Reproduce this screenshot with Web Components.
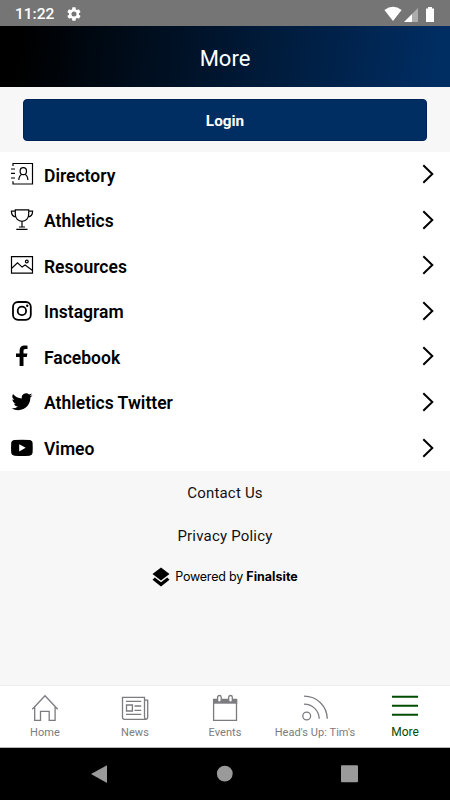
<!DOCTYPE html>
<html lang="en">
<head>
<meta charset="utf-8">
<meta name="viewport" content="width=device-width, initial-scale=1">
<title>More</title>
<style>
    html, body{
        margin: 0;
        height: 100%;
    }
    body{
        font-family: Roboto, "Liberation Sans", sans-serif;
        color: #000;
        background: #f7f7f7;
        overflow: hidden;
    }
</style>
</head>
<body>
<more-screen></more-screen>

<script>
// All the glyphs, keyed by the name that <app-icon> receives
const ICONS = {
    gear: `<svg viewBox="0 0 24 24"><path fill="currentColor" fill-rule="evenodd" d="M19.4 13c0-.3.1-.6.1-1s0-.7-.1-1l2.1-1.600c.2-.2.3-.4.100-.7l-2-3.400c-.1-.2-.4-.3-.6-.2l-2.500 1c-.5-.4-1.100-.7-1.700-1l-.4-2.600c0-.3-.2-.5-.5-.5h-4c-.3 0-.5.2-.5.5L9 5.100c-.6.300-1.200.6-1.700 1l-2.500-1c-.2-.1-.5 0-.6.2l-2 3.400c-.1.300 0 .5.1.7L4.500 11c0 .3-.1.7-.1 1s0 .7.100 1l-2.200 1.600c-.1.200-.2.400-.1.700l2 3.400c.1.200.4.300.6.2l2.500-1c.5.400 1.100.7 1.700 1l.4 2.600c0 .3.200.5.500.5h4c.3 0 .5-.2.500-.5l.4-2.600c.6-.3 1.200-.6 1.700-1l2.500 1c.2.100.5 0 .6-.2l2-3.400c.1-.3.1-.5-.1-.7zM12 15.800a3.800 3.800 0 1 1 0-7.600 3.800 3.800 0 0 1 0 7.600z"/></svg>`,
    wifi: `<svg viewBox="0 0 18 16"><path fill="currentColor" d="M9 15L.4 4Q9-2.600 17.600 4z"/></svg>`,
    signal: `<svg viewBox="0 0 14 14"><path fill="currentColor" opacity=".4" d="M14 0v14H8V6z"/><path fill="currentColor" d="M8 6v8H0z"/></svg>`,
    battery: `<svg viewBox="0 0 8 15"><path fill="currentColor" d="M2 0h4v1.500h2V15H0V1.500h2z"/></svg>`,
    directory: `<svg viewBox="0 0 24 24"><g fill="none" stroke="currentColor" stroke-width="1.200"><path d="M3 4V1.500h19.500V22H3v-2.800M1 7h4M1 11.400h4M1 16h4"/><ellipse cx="13.300" cy="9.200" rx="3.200" ry="3.500"/><path d="M8.800 18c.2-3.200 1.200-4.900 3-5.500M17.900 18c-.2-3.200-1.200-4.900-3-5.500"/></g></svg>`,
    trophy: `<svg viewBox="0 0 24 24"><g fill="none" stroke="currentColor" stroke-width="1.200"><path d="M5.300 1.800h13.400v4.400c0 4.400-3 7.200-6.700 7.200s-6.700-2.800-6.700-7.200zM5.300 3.200H1.400c0 3 1.800 5.400 4.500 5.700M18.700 3.200h3.900c0 3-1.800 5.400-4.500 5.700M12 13.400V19M9 19h6M6.300 21.400h11.200"/></g></svg>`,
    image: `<svg viewBox="0 0 24 24"><g fill="none" stroke="currentColor" stroke-width="1.200"><path d="M1.500 3.700h21v16.500h-21zM1.500 15.500l6-5.700 4.600 4.300 3-2 7.400 5.400"/><circle cx="16.800" cy="8.500" r="1.400"/></g></svg>`,
    instagram: `<svg viewBox="0 0 24 24"><g fill="none" stroke="currentColor" stroke-width="1.800"><rect x="3" y="3" width="17.800" height="17.800" rx="5"/><circle cx="11.900" cy="11.900" r="4.200"/></g><circle cx="17.200" cy="6.800" r="1.200" fill="currentColor"/></svg>`,
    facebook: `<svg viewBox="0 0 24 24"><path fill="currentColor" d="M9.600 22v-9H6V9.400h3.600V6.500c0-3.200 1.900-4.900 4.800-4.900 1.400 0 2.500.1 3.100.2v3.200h-1.900c-1.700 0-2.100.9-2.100 2.100v2.300h3.900l-.6 3.600h-3.300v9z"/></svg>`,
    twitter: `<svg viewBox="0 0 24 24"><path fill="currentColor" transform="translate(1.600 1.300) scale(.87)" d="M23.950 4.570a10 10 0 0 1-2.820.77 4.960 4.960 0 0 0 2.160-2.720c-.95.550-2 .950-3.130 1.180a4.920 4.920 0 0 0-8.380 4.480C7.690 8.100 4.070 6.130 1.640 3.160a4.920 4.920 0 0 0 1.520 6.570 4.900 4.900 0 0 1-2.230-.61v.06c0 2.380 1.700 4.370 3.950 4.820a5 5 0 0 1-2.210.09 4.940 4.940 0 0 0 4.600 3.420A9.870 9.870 0 0 1 0 19.540a13.990 13.990 0 0 0 7.550 2.210c9.050 0 14-7.500 14-13.980 0-.21 0-.42-.02-.63a9.940 9.940 0 0 0 2.460-2.550z"/></svg>`,
    video: `<svg viewBox="0 0 24 24"><path fill="currentColor" fill-rule="evenodd" d="M4.500 3.900Q12 3.500 19.400 3.900q3 .2 3.200 3.100.3 4.800 0 9.600-.3 2.900-3.200 3.100-7.400.4-14.900 0-3-.2-3.300-3.100-.3-4.800 0-9.600.3-2.900 3.300-3.100zM9.200 8.200v7.300l6.500-3.700z"/></svg>`,
    chevron: `<svg viewBox="0 0 12 20"><path fill="none" stroke="currentColor" stroke-width="2" d="M1.300 1.200L10.300 10l-9 8.800"/></svg>`,
    finalsite: `<svg viewBox="0 0 18 20"><path fill="currentColor" d="M9 .5L17.500 7 9 13.500.5 7zM2.800 10.500L9 15.200l6.200-4.700 2.300 2.200L9 19.400.5 12.700z"/></svg>`,
    home: `<svg viewBox="0 0 28 28"><path fill="none" stroke="currentColor" stroke-width="1.300" d="M1.300 15.300L14 1.700l12.700 13.600M3.700 13.200v13.200h5.800v-9h8.700v9h5.900V13.200"/></svg>`,
    news: `<svg viewBox="0 0 28 28"><g fill="none" stroke="currentColor" stroke-width="1.300"><path d="M23.500 22.800V3.300h-22v20q0 2 2 2h21q2.200 0 2.200-2.200V6.200h-3.200M23.500 22.800q0 2 1.400 2.400M5 7.400h15.200M5 20.400h15.200M13.500 12h6.700M13.500 16.300h6.700"/><path d="M5.500 11h5.900v6H5.500z"/></g></svg>`,
    events: `<svg viewBox="0 0 28 28"><path fill="none" stroke="currentColor" stroke-width="1.300" d="M2.600 5.500h22.900v20.900H2.600z"/><path fill="currentColor" d="M2 5h24.200v4.700H2z"/><g fill="#fff" stroke="currentColor" stroke-width="1.300"><rect x="6.600" y="1.500" width="3.600" height="6.700" rx="1.800"/><rect x="17.700" y="1.500" width="3.600" height="6.700" rx="1.800"/></g></svg>`,
    feed: `<svg viewBox="0 0 28 28"><g fill="none" stroke="currentColor" stroke-width="1.300"><circle cx="5.700" cy="22" r="3.900"/><path d="M3 10.200c8.500 0 15 6.200 15.200 14.600M3 2.200c13 0 23 9.800 23.300 22.600"/></g></svg>`,
    menu: `<svg viewBox="0 0 28 28"><path stroke="currentColor" stroke-width="2" d="M1 2.800h26M1 11.800h26M1 20.800h26"/></svg>`,
    back: `<svg viewBox="0 0 18 18"><path fill="currentColor" d="M16 .2v17.700L0 9z"/></svg>`,
    circle: `<svg viewBox="0 0 18 18"><circle cx="8.800" cy="8.700" r="7.900" fill="currentColor"/></svg>`,
    square: `<svg viewBox="0 0 18 18"><rect x="0" y=".2" width="17" height="17" rx="1" fill="currentColor"/></svg>`
};

class AppIcon extends HTMLElement {
    constructor(){
        super();
        this.root = this.attachShadow({mode: 'open'});
    }
    connectedCallback(){
        this.root.innerHTML = `
            <style>
                :host{ display: block; flex: none; }
                svg{ display: block; width: 100%; height: 100%; overflow: visible; }
            </style>
            ${ICONS[this.getAttribute('name')] || ''}
        `;
    }
}
customElements.define('app-icon', AppIcon);

class StatusBar extends HTMLElement {
    constructor(){
        super();
        this.root = this.attachShadow({mode: 'open'});
        this.root.innerHTML = `
            <style>
                :host{
                    display: flex;
                    align-items: center;
                    box-sizing: border-box;
                    height: 26px;
                    padding: 1px 16px 0 15px;
                    background: #757575;
                    color: #fff;
                    font-size: 15.500px;
                    font-weight: 500;
                }
                .gear{ width: 16px; height: 16px; margin-left: 11.500px; }
                .right{ display: flex; align-items: flex-end; gap: 2px; margin-left: auto; }
                .wifi{ width: 18px; height: 16px; }
                .signal{ width: 14px; height: 14px; }
                .battery{ width: 8px; height: 15px; margin-left: 6px; }
            </style>
            <slot></slot>
            <app-icon class="gear" name="gear"></app-icon>
            <div class="right">
                <app-icon class="wifi" name="wifi"></app-icon>
                <app-icon class="signal" name="signal"></app-icon>
                <app-icon class="battery" name="battery"></app-icon>
            </div>
        `;
    }
}
customElements.define('status-bar', StatusBar);

class AppHeader extends HTMLElement {
    constructor(){
        super();
        this.root = this.attachShadow({mode: 'open'});
        this.root.innerHTML = `
            <style>
                :host{
                    display: flex;
                    align-items: center;
                    justify-content: center;
                    box-sizing: border-box;
                    height: 61px;
                    padding-top: 3px;
                    background: linear-gradient(98deg, #000 5%, #002d62 96%);
                    color: #fff;
                    font-size: 22px;
                }
            </style>
            <slot></slot>
        `;
    }
}
customElements.define('app-header', AppHeader);

class LoginButton extends HTMLElement {
    constructor(){
        super();
        this.root = this.attachShadow({mode: 'open'});
        this.root.innerHTML = `
            <style>
                :host{
                    display: block;
                    box-sizing: border-box;
                    height: 65px;
                    padding: 12px 23px 0;
                }
                button{
                    display: block;
                    width: 100%;
                    height: 42px;
                    padding: 2px 0 0;
                    border: 1px solid #00205a;
                    border-radius: 4px;
                    background: #002d62;
                    color: #fff;
                    font: 700 15.300px Roboto, sans-serif;
                }
            </style>
            <button><slot></slot></button>
        `;
    }
}
customElements.define('login-button', LoginButton);

class MenuRow extends HTMLElement {
    constructor(){
        super();
        this.root = this.attachShadow({mode: 'open'});
    }
    connectedCallback(){
        this.root.innerHTML = `
            <style>
                :host{
                    display: flex;
                    align-items: center;
                    box-sizing: border-box;
                    height: 45.6px;
                    padding: 0 16px 1.600px 10px;
                    background: #fff;
                    font-size: 17.500px;
                    font-weight: 600;
                }
                .icon{ width: 24px; height: 24px; margin-right: 10px; }
                .label{ flex: 1; padding-top: 3px; }
                .chevron{ width: 12px; height: 20px; }
            </style>
            <app-icon class="icon" name="${this.getAttribute('icon')}"></app-icon>
            <div class="label"><slot></slot></div>
            <app-icon class="chevron" name="chevron"></app-icon>
        `;
    }
}
customElements.define('menu-row', MenuRow);

class PageFooter extends HTMLElement {
    constructor(){
        super();
        this.root = this.attachShadow({mode: 'open'});
        this.root.innerHTML = `
            <style>
                :host{
                    display: flex;
                    flex-direction: column;
                    align-items: center;
                    flex: 1;
                    padding-top: 12px;
                    font-size: 15px;
                    line-height: 20px;
                    color: #111;
                }
                ::slotted(*){ margin-bottom: 22.500px; letter-spacing: .2px; }
                .powered{
                    display: flex;
                    align-items: center;
                    gap: 5px;
                    margin-top: -1px;
                    color: #000;
                    font-family: Inter, sans-serif;
                    font-size: 12.500px;
                    letter-spacing: -.2px;
                }
                .powered app-icon{ width: 18px; height: 20px; }
                b{ font-weight: 700; letter-spacing: 0; }
            </style>
            <slot></slot>
            <div class="powered"><app-icon name="finalsite"></app-icon><span>Powered by <b>Finalsite</b></span></div>
        `;
    }
}
customElements.define('page-footer', PageFooter);

class TabItem extends HTMLElement {
    constructor(){
        super();
        this.root = this.attachShadow({mode: 'open'});
    }
    connectedCallback(){
        this.root.innerHTML = `
            <style>
                :host{
                    display: flex;
                    flex-direction: column;
                    align-items: center;
                    flex: 1 1 0;
                    color: #7b7b80;
                    font-size: 11px;
                    line-height: 14px;
                    letter-spacing: .05px;
                    white-space: nowrap;
                }
                :host([active]){
                    color: #004d00;
                    font-size: 12px;
                    line-height: 12px;
                    letter-spacing: 0;
                }
                app-icon{ width: 28px; height: 28px; margin-bottom: 4px; }
            </style>
            <app-icon name="${this.getAttribute('icon')}"></app-icon>
            <slot></slot>
        `;
    }
}
customElements.define('tab-item', TabItem);

class TabBar extends HTMLElement {
    constructor(){
        super();
        this.root = this.attachShadow({mode: 'open'});
        this.root.innerHTML = `
            <style>
                :host{
                    display: flex;
                    box-sizing: border-box;
                    height: 63px;
                    padding-top: 8px;
                    border-top: 1px solid #eee;
                    border-bottom: 1px solid #b5b5b5;
                    background: #fff;
                }
            </style>
            <slot></slot>
        `;
    }
}
customElements.define('tab-bar', TabBar);

class SystemNav extends HTMLElement {
    constructor(){
        super();
        this.root = this.attachShadow({mode: 'open'});
        this.root.innerHTML = `
            <style>
                :host{
                    display: flex;
                    align-items: center;
                    justify-content: center;
                    gap: 107px;
                    height: 52px;
                    background: #000;
                    color: #9a9a9a;
                }
                app-icon{ width: 18px; height: 18px; }
            </style>
            <app-icon name="back"></app-icon>
            <app-icon name="circle"></app-icon>
            <app-icon name="square"></app-icon>
        `;
    }
}
customElements.define('system-nav', SystemNav);

class MoreScreen extends HTMLElement {
    constructor(){
        super();
        this.root = this.attachShadow({mode: 'open'});
        this.root.innerHTML = `
            <style>
                :host{
                    display: flex;
                    flex-direction: column;
                    width: 450px;
                    height: 800px;
                    background: #f7f7f7;
                }
            </style>
            <status-bar>11:22</status-bar>
            <app-header>More</app-header>
            <login-button>Login</login-button>
            <menu-row icon="directory">Directory</menu-row>
            <menu-row icon="trophy">Athletics</menu-row>
            <menu-row icon="image">Resources</menu-row>
            <menu-row icon="instagram">Instagram</menu-row>
            <menu-row icon="facebook">Facebook</menu-row>
            <menu-row icon="twitter">Athletics Twitter</menu-row>
            <menu-row icon="video">Vimeo</menu-row>
            <page-footer>
                <span>Contact Us</span>
                <span>Privacy Policy</span>
            </page-footer>
            <tab-bar>
                <tab-item icon="home">Home</tab-item>
                <tab-item icon="news">News</tab-item>
                <tab-item icon="events">Events</tab-item>
                <tab-item icon="feed">Head's Up: Tim's</tab-item>
                <tab-item icon="menu" active>More</tab-item>
            </tab-bar>
            <system-nav></system-nav>
        `;
    }
}
customElements.define('more-screen', MoreScreen);
</script>
</body>
</html>
